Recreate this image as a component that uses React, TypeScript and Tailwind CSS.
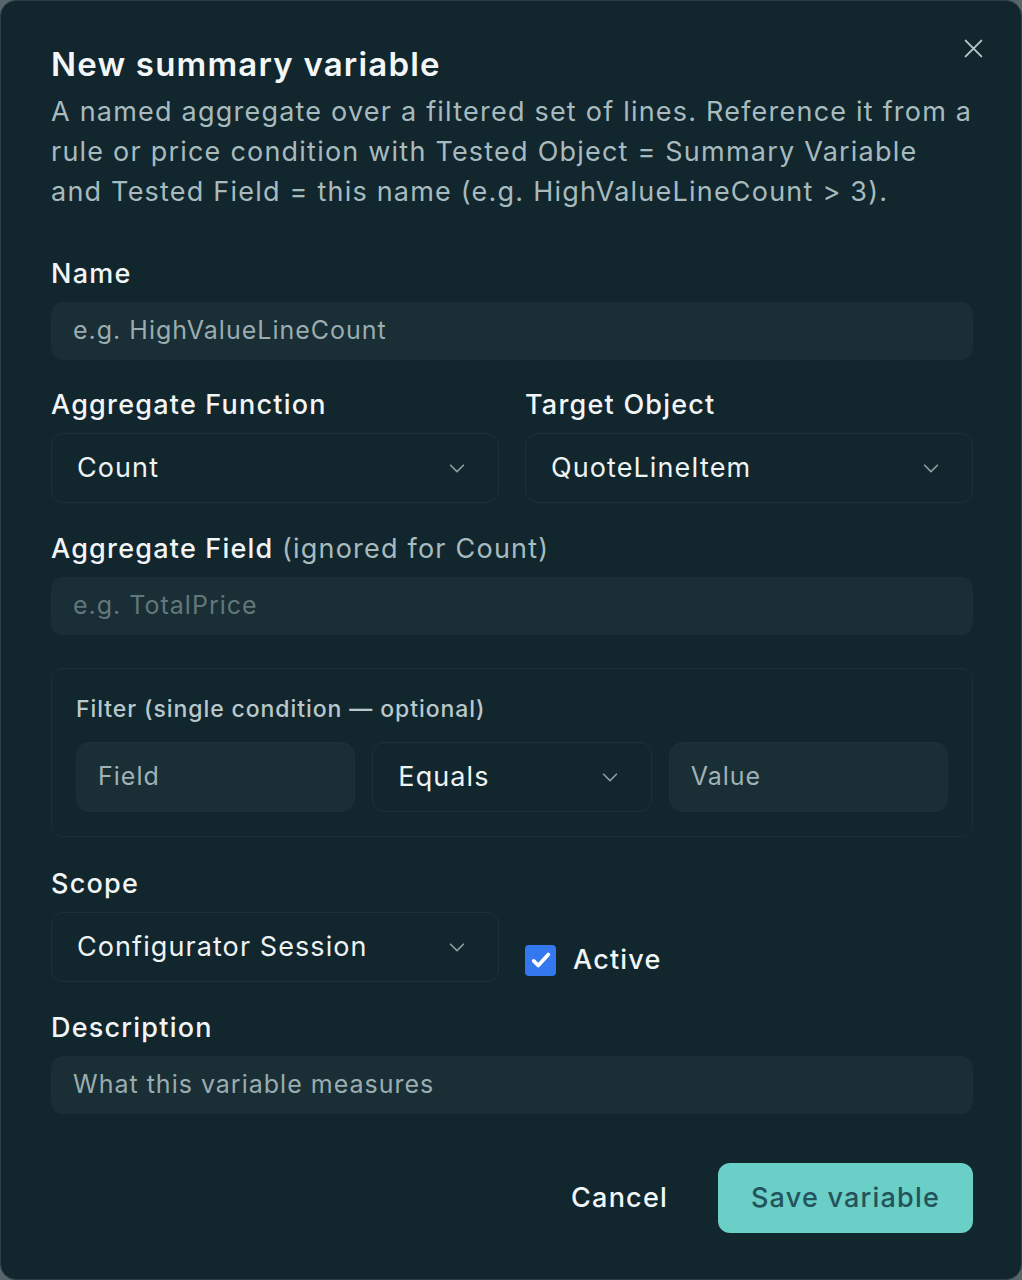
import React from "react";

const Chevron = () => (
  <svg width="22" height="22" viewBox="0 0 24 24" fill="none" stroke="#8a9ca0" strokeWidth="1.8" strokeLinecap="round" strokeLinejoin="round">
    <path d="M5 9l7 7 7-7" />
  </svg>
);

const Select = ({ value, className = "" }: { value: string; className?: string }) => (
  <div className={`flex h-[70px] items-center justify-between rounded-[12px] border border-[#1d3139] bg-[#12262e] pl-[25px] pr-[30px] ${className}`}>
    <span className="text-[27px] tracking-[0.04em] text-[#eef3f4]">{value}</span>
    <Chevron />
  </div>
);

const Input = ({ placeholder, dim = false, className = "" }: { placeholder: string; dim?: boolean; className?: string }) => (
  <div className={`flex h-[58px] items-center rounded-[12px] bg-[#1a2e35] px-[22px] ${className}`}>
    <span className={`text-[25px] tracking-[0.04em] ${dim ? "text-[#62777b]" : "text-[#99adb1]"}`}>{placeholder}</span>
  </div>
);

const Label = ({ children }: { children: React.ReactNode }) => (
  <div className="text-[27px] font-medium leading-[36px] tracking-[0.045em] text-[#f1f5f6]">{children}</div>
);

export default function App() {
  return (
    <div className="min-h-[1280px] w-[1022px] bg-[#56666b]" style={{ fontFamily: "Inter, 'Noto Sans', sans-serif" }}>
      <div className="relative flex h-[1280px] w-[1022px] flex-col rounded-[16px] border border-[#2c3f45] bg-[#12262e] pl-[50px] pr-[48px] pt-[43px]">
        <button className="absolute right-[37px] top-[37px] text-[#b5c4c7]">
          <svg width="21" height="21" viewBox="0 0 24 24" fill="none" stroke="currentColor" strokeWidth="2.2" strokeLinecap="round">
            <path d="M3 3l18 18M21 3L3 21" />
          </svg>
        </button>
        <h1 className="text-[33px] font-semibold leading-[40px] tracking-[0.036em] text-[#f3f7f8]">New summary variable</h1>
        <p className="mt-[8px] text-[27px] leading-[40px] tracking-[0.045em] text-[#a7bbbf]">
          A named aggregate over a filtered set of lines. Reference it from a<br />
          rule or price condition with Tested Object = Summary Variable<br />
          and Tested Field = this name (e.g. HighValueLineCount &gt; 3).
        </p>

        <div className="mt-[44px]">
          <Label>Name</Label>
          <Input placeholder="e.g. HighValueLineCount" className="mt-[10px]" />
        </div>

        <div className="mt-[27px] grid grid-cols-2 gap-[26px]">
          <div>
            <Label>Aggregate Function</Label>
            <Select value="Count" className="mt-[10px]" />
          </div>
          <div>
            <Label>Target Object</Label>
            <Select value="QuoteLineItem" className="mt-[10px]" />
          </div>
        </div>

        <div className="mt-[28px]">
          <Label>
            Aggregate Field <span className="font-normal text-[#a7bbbf]">(ignored for Count)</span>
          </Label>
          <Input placeholder="e.g. TotalPrice" dim className="mt-[10px]" />
        </div>

        <div className="mt-[33px] rounded-[12px] border border-[#1b2f37] px-[24px] pb-[24px] pt-[24px]">
          <div className="text-[23px] font-medium leading-[32px] tracking-[0.04em] text-[#b9c8cb]">Filter (single condition — optional)</div>
          <div className="mt-[17px] grid grid-cols-3 gap-[17px]">
            <div className="flex h-[70px] items-center rounded-[14px] border border-[#1d3139] bg-[#1a2e35] px-[21px]">
              <span className="text-[25px] tracking-[0.04em] text-[#9fb2b6]">Field</span>
            </div>
            <Select value="Equals" />
            <div className="flex h-[70px] items-center rounded-[14px] border border-[#1d3139] bg-[#1a2e35] px-[21px]">
              <span className="text-[25px] tracking-[0.04em] text-[#9fb2b6]">Value</span>
            </div>
          </div>
        </div>

        <div className="mt-[29px] grid grid-cols-2 gap-[26px]">
          <div>
            <Label>Scope</Label>
            <Select value="Configurator Session" className="mt-[10px]" />
          </div>
          <div className="flex items-center gap-[17px] pt-[72px]">
            <div className="flex h-[31px] w-[31px] items-center justify-center rounded-[4px] bg-[#3478f0]">
              <svg width="22" height="22" viewBox="0 0 24 24" fill="none" stroke="white" strokeWidth="4" strokeLinecap="round" strokeLinejoin="round">
                <path d="M4 13l5 5L20 6" />
              </svg>
            </div>
            <span className="text-[27px] font-medium tracking-[0.045em] text-[#f1f5f6]">Active</span>
          </div>
        </div>

        <div className="mt-[28px]">
          <Label>Description</Label>
          <Input placeholder="What this variable measures" className="mt-[10px]" />
        </div>

        <div className="mt-[49px] flex items-center justify-end gap-[50px]">
          <button className="text-[27px] font-medium tracking-[0.045em] text-[#f3f7f8]">Cancel</button>
          <button className="flex h-[70px] w-[255px] items-center justify-center rounded-[12px] bg-[#6acfc6] text-[27px] font-medium tracking-[0.045em] text-[#24535b]">
            Save variable
          </button>
        </div>
      </div>
    </div>
  );
}
